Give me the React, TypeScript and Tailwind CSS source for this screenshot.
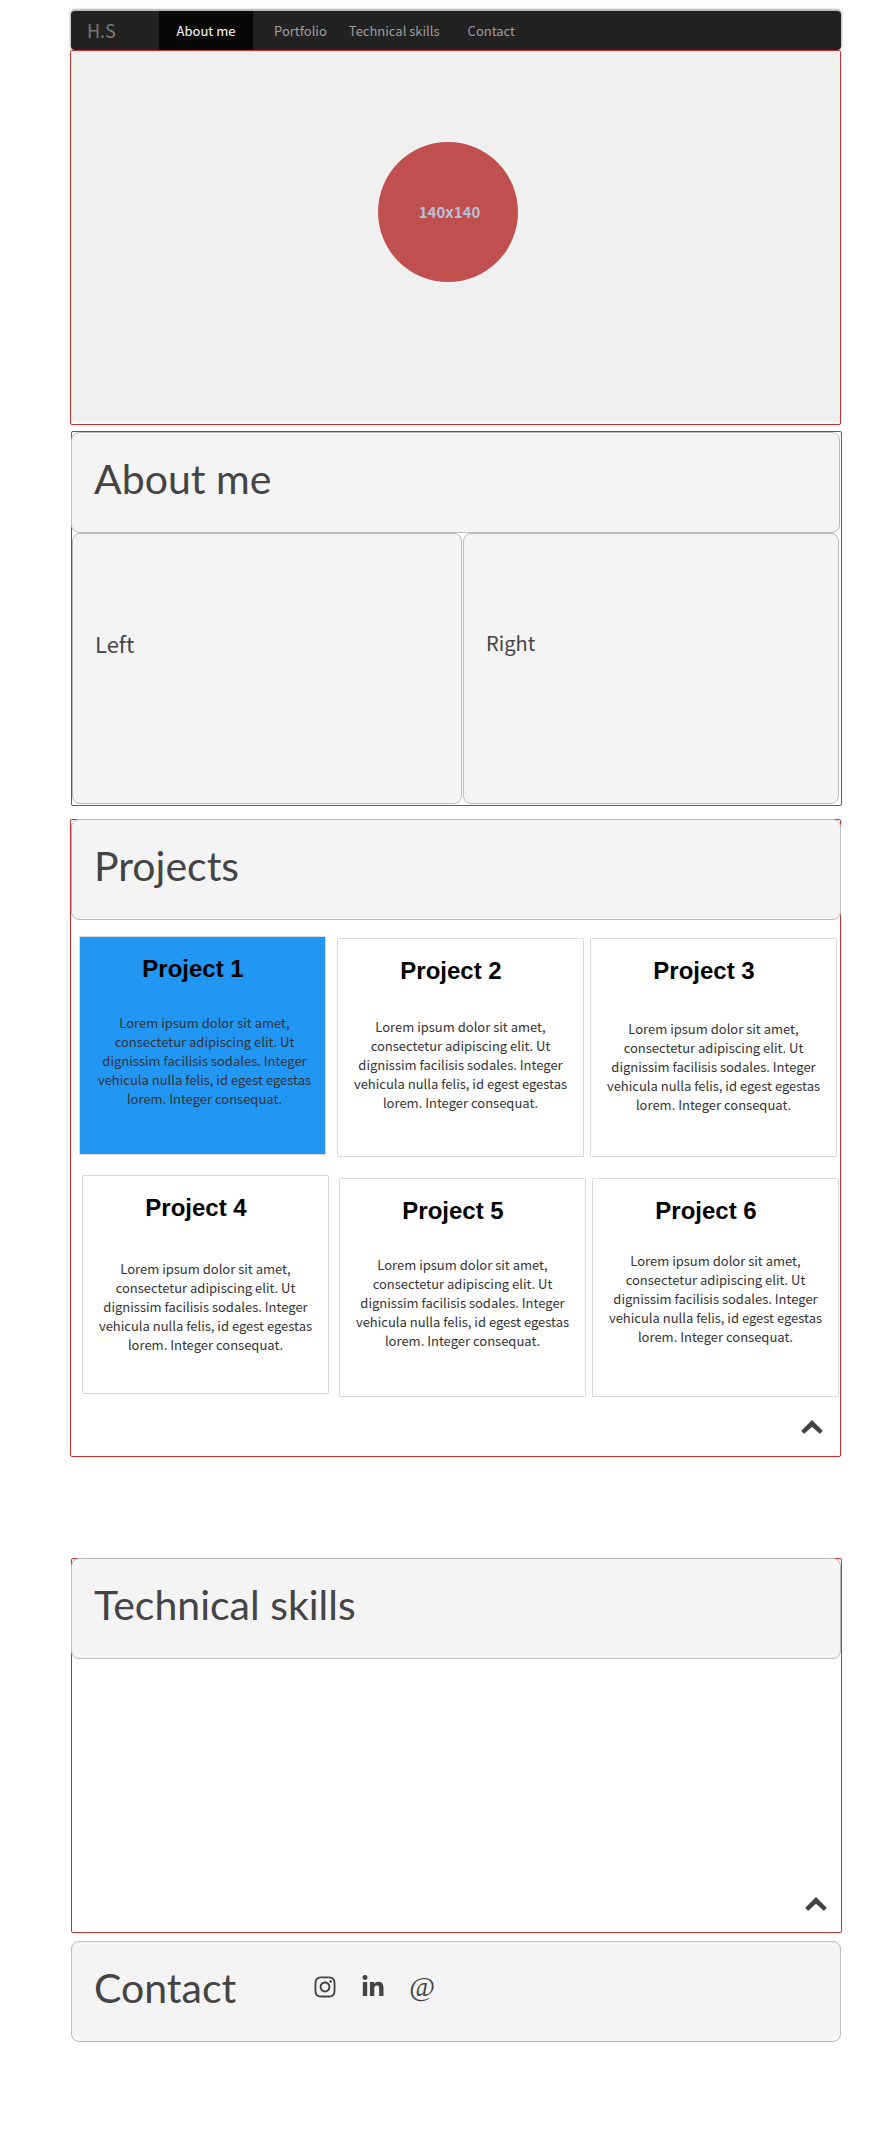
import type { ReactNode } from "react";
import { FaInstagram, FaLinkedinIn } from "react-icons/fa";

const SANS = "font-['Noto_Sans_CJK_SC',sans-serif]";

type CardProps = { title: string; textGap: string; active?: boolean };

function ProjectCard({ title, textGap, active = false }: CardProps) {
  return (
    <article
      className={`h-[219px] min-w-0 flex-1 rounded-[1px] border border-[#d9dadb] px-3 pt-[18px] text-center ${
        active ? "bg-[#2196f3]" : "bg-white"
      }`}
    >
      <h2 className="pr-[19px] font-['Liberation_Sans',sans-serif] text-2xl leading-7 font-bold text-black">
        {title}
      </h2>
      <p className={`text-[13px] leading-[19px] text-[#333333] ${textGap}`}>
        Lorem ipsum dolor sit amet, consectetur adipiscing elit. Ut dignissim facilisis sodales. Integer
        vehicula nulla felis, id egest egestas lorem. Integer consequat.
      </p>
    </article>
  );
}

function HeaderPanel({ title, children }: { title: string; children?: ReactNode }) {
  return (
    <header className="flex h-[101px] items-start rounded-lg border border-[#bbbbbb] bg-[#f4f4f4] pt-[22px] pl-[22px]">
      <h1 className="font-['Lato',sans-serif] text-[41px] leading-[48px] font-normal whitespace-nowrap text-[#444444]">
        {title}
      </h1>
      {children}
    </header>
  );
}

function BackToTop() {
  return (
    <a href="#top" aria-label="Back to top" className="block">
      <svg width="22" height="14" viewBox="0 0 22 14" fill="#444444">
        <path d="M11 0 L21.5 10.4 Q21.9 10.8 21.5 11.2 L19.2 13.5 Q18.8 13.9 18.4 13.5 L11 6.8 L3.6 13.5 Q3.2 13.9 2.8 13.5 L0.5 11.2 Q0.1 10.8 0.5 10.4 Z" />
      </svg>
    </a>
  );
}

export default function App() {
  return (
    <div id="top" className={`bg-white pt-[11px] pr-[49px] pb-[109px] pl-[70px] ${SANS}`}>
      <nav className="mr-px ml-px flex h-[39px] items-stretch rounded bg-[#222222] text-[13px] leading-[19px] whitespace-nowrap text-[#9d9d9d] shadow-[0_-1px_2px_1px_rgba(0,0,0,0.3)]">
        <a href="#top" className="flex w-[88px] items-center pl-4 text-lg leading-[19px] text-[#777777]">
          H.S
        </a>
        <a href="#about" className="flex w-[94px] items-center justify-center bg-[#080808] text-white">
          About me
        </a>
        <a href="#projects" className="flex items-center pl-[21px]">
          Portfolio
        </a>
        <a href="#skills" className="flex items-center pl-[22px]">
          Technical skills
        </a>
        <a href="#contact" className="flex items-center pl-7">
          Contact
        </a>
      </nav>

      <section className="mr-px rounded-[2px] border border-[#c9302c] pb-0.5">
        <div className="flex h-[371px] items-start justify-center bg-[#f0f0f0] pt-[91px] pr-4">
          <div className="flex size-[140px] items-center justify-center rounded-full bg-[#c05050] pl-1 text-[15px] font-bold text-[#b4c0d4]">
            140x140
          </div>
        </div>
      </section>

      <section id="about" className="mt-1.5 ml-px rounded-[2px] border border-[#c9302c]">
        <div className="mr-px -ml-px">
          <HeaderPanel title="About me" />
        </div>
        <div className="flex gap-px pr-0.5 pb-px text-[#444444]">
          <div className="h-[271px] min-w-0 flex-[391_1_0%] rounded-lg border border-[#bbbbbb] bg-[#f4f4f4] pt-[89px] pl-[22px] text-[22px] leading-10">
            Left
          </div>
          <div className="h-[271px] min-w-0 flex-[376_1_0%] rounded-lg border border-[#bbbbbb] bg-[#f4f4f4] pt-[89px] pl-[22px] text-xl leading-10">
            Right
          </div>
        </div>
      </section>

      <section id="projects" className="mt-[13px] mr-px rounded-[2px] border border-[#c9302c]">
        <div className="-mt-px -mr-px">
          <HeaderPanel title="Projects" />
        </div>
        <div className="flex gap-[11px] pt-4 pr-[3px] pl-2">
          <div className="flex min-w-0 flex-[247_1_0%]">
            <ProjectCard title="Project 1" textGap="pt-[30px] pl-1" active />
          </div>
          <div className="flex min-w-0 flex-[500_1_0%] gap-1.5 pt-0.5">
            <ProjectCard title="Project 2" textGap="pt-8" />
            <ProjectCard title="Project 3" textGap="pt-[34px]" />
          </div>
        </div>
        <div className="flex gap-2.5 pt-[18px] pr-px pl-[11px]">
          <div className="flex min-w-0 flex-[247_1_0%]">
            <ProjectCard title="Project 4" textGap="pt-[37px]" />
          </div>
          <div className="flex min-w-0 flex-[500_1_0%] gap-1.5 pt-[3px]">
            <ProjectCard title="Project 5" textGap="pt-[30px]" />
            <ProjectCard title="Project 6" textGap="pt-[26px]" />
          </div>
        </div>
        <div className="flex justify-end pt-[23px] pr-[17px] pb-[22px]">
          <BackToTop />
        </div>
      </section>

      <section
        id="skills"
        className="mt-[101px] ml-px flex h-[375px] flex-col rounded-[2px] border border-[#c9302c]"
      >
        <div className="-mt-px -ml-px">
          <HeaderPanel title="Technical skills" />
        </div>
        <div className="mt-auto flex justify-end pr-[14px] pb-[21px]">
          <BackToTop />
        </div>
      </section>

      <section id="contact" className="mt-2 mr-px ml-px">
        <HeaderPanel title="Contact">
          <div className="flex items-center gap-6 pt-[11px] pl-[77px] text-[#444444]">
            <a href="#instagram" aria-label="Instagram">
              <FaInstagram size={24} />
            </a>
            <a href="#linkedin" aria-label="LinkedIn">
              <FaLinkedinIn size={24} />
            </a>
            <a
              href="#email"
              aria-label="Email"
              className="font-['Liberation_Serif',serif] text-[28px] leading-6"
            >
              @
            </a>
          </div>
        </HeaderPanel>
      </section>
    </div>
  );
}
